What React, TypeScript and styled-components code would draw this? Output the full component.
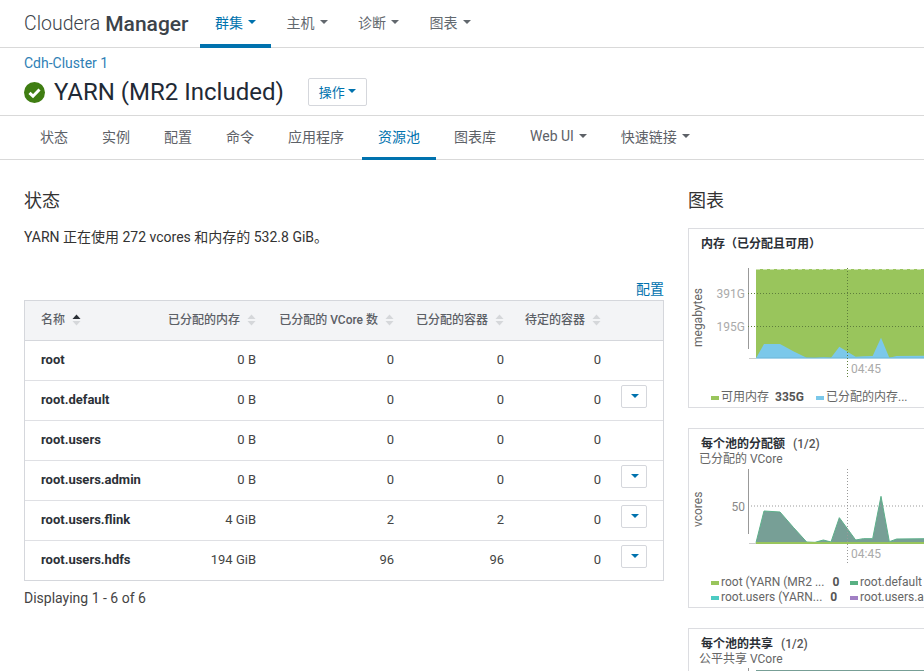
import React from "react";
import styled, { createGlobalStyle } from "styled-components";

const FONT = `Roboto, "Noto Sans CJK SC", sans-serif`;
const BLUE = "#0072ae";

const Global = createGlobalStyle`
  html, body { margin: 0; padding: 0; background: #fff; }
  body { font-family: ${FONT}; color: #333; }
  * { box-sizing: border-box; }
`;

const Page = styled.div`
  width: 924px;
  height: 671px;
  overflow: hidden;
`;

const TopBar = styled.header`
  height: 48px;
  display: flex;
  align-items: stretch;
  padding-left: 24px;
  border-bottom: 1px solid #d9d9d9;
`;

const Logo = styled.div`
  width: 176px;
  display: flex;
  align-items: center;
  height: 47px;
  font-size: 19.5px;
  font-weight: 300;
  color: #3c434a;
  white-space: nowrap;
  b { font-size: 21px; font-weight: 500; margin-left: 5px; }
`;

const TopItem = styled.a<{ $active?: boolean }>`
  height: 48px;
  margin-right: 0.5px;
  padding: 2px 15px 3px;
  display: flex;
  align-items: center;
  gap: 3px;
  font-size: 14px;
  color: ${(p) => (p.$active ? BLUE : "#62686e")};
  border-bottom: 4px solid ${(p) => (p.$active ? BLUE : "transparent")};
`;

const Caret = styled.span<{ $color?: string }>`
  display: inline-block;
  width: 0;
  height: 0;
  margin-left: 2px;
  border-left: 4px solid transparent;
  border-right: 4px solid transparent;
  border-top: 4px solid ${(p) => p.$color ?? "currentColor"};
`;

const ServiceHead = styled.div`
  height: 68px;
  padding: 7px 24px 0;
  border-bottom: 1px solid #d9d9d9;
`;

const Crumb = styled.a`
  display: block;
  font-size: 14px;
  line-height: 16px;
  color: #2f7fb5;
`;

const TitleRow = styled.div`
  display: flex;
  align-items: center;
  margin-top: 6px;
  height: 30px;
`;

const Title = styled.h1`
  margin: 0 24px 0 9px;
  font-size: 24px;
  font-weight: 400;
  color: #1f2a36;
  line-height: 30px;
  white-space: nowrap;
`;

const ActionButton = styled.button`
  width: 59px;
  height: 28px;
  padding: 0 0 2px;
  display: flex;
  align-items: center;
  justify-content: center;
  gap: 1px;
  font: 13px ${FONT};
  color: ${BLUE};
  background: #fff;
  border: 1px solid #d5d7dc;
  border-radius: 2px;
`;

const Tabs = styled.nav`
  height: 44px;
  display: flex;
  padding-left: 23px;
  border-bottom: 1px solid #d9d9d9;
`;

const Tab = styled.a<{ $active?: boolean }>`
  height: 44px;
  margin: 0 1px;
  padding: 0 16px 2px;
  display: flex;
  align-items: center;
  gap: 3px;
  font-size: 14px;
  white-space: nowrap;
  color: ${(p) => (p.$active ? BLUE : "#5d6167")};
  border-bottom: 3px solid ${(p) => (p.$active ? BLUE : "transparent")};
`;

const Columns = styled.main`
  display: grid;
  grid-template-columns: 640px 420px;
  column-gap: 24px;
  padding: 28px 0 0 24px;
`;

const SectionTitle = styled.h2`
  margin: 0;
  font-size: 18px;
  line-height: 26px;
  font-weight: 400;
  color: #333;
`;

const Summary = styled.p`
  margin: 13px 0 0;
  font-size: 14px;
  line-height: 20px;
  color: #333;
`;

const ConfigLink = styled.a`
  display: block;
  margin-top: 32px;
  text-align: right;
  font-size: 14px;
  line-height: 20px;
  color: ${BLUE};
`;

const Table = styled.table`
  width: 640px;
  margin-top: 1px;
  table-layout: fixed;
  border-collapse: separate;
  border-spacing: 0;
  border: 1px solid #d5d7dc;
  font-size: 13px;
`;

const HeadCell = styled.th<{ $right?: boolean; $first?: boolean }>`
  height: 40px;
  padding: 0 8px 5px ${(p) => (p.$first ? "16px" : "0")};
  background: #f3f4f6;
  border-bottom: 1px solid #d5d7dc;
  text-align: ${(p) => (p.$right ? "right" : "left")};
  font-size: 12px;
  font-weight: 500;
  color: #5c6066;
  white-space: nowrap;
`;

const Cell = styled.td<{ $right?: boolean; $first?: boolean; $last?: boolean }>`
  height: ${(p) => (p.$last ? "39px" : "40px")};
  padding: 0 8px 2px ${(p) => (p.$first ? "16px" : "0")};
  border-bottom: ${(p) => (p.$last ? "none" : "1px solid #dfe0e4")};
  text-align: ${(p) => (p.$right ? "right" : "left")};
  font-weight: ${(p) => (p.$first ? 700 : 400)};
  color: ${(p) => (p.$first ? "#2b3036" : "#444")};
  white-space: nowrap;
`;

const RowMenu = styled.button`
  width: 26px;
  height: 23px;
  padding: 0;
  margin: 0 0 7px 12px;
  display: flex;
  align-items: center;
  justify-content: center;
  background: #fff;
  border: 1px solid #d5d7dc;
  border-radius: 2px;
  color: ${BLUE};
`;

const Footnote = styled.div`
  margin-top: 7px;
  font-size: 14px;
  line-height: 20px;
  color: #444;
`;

const Cards = styled.div`
  display: flex;
  flex-direction: column;
  gap: 20px;
  margin-top: 14px;
`;

const Card = styled.section`
  height: 180px;
  border: 1px solid #dcdde1;
  padding: 7px 0 0 12px;
`;

const CardTitle = styled.div`
  font-size: 12px;
  line-height: 16px;
  font-weight: 700;
  color: #2b3036;
  white-space: nowrap;
  span { font-weight: 500; color: #555; margin-left: 8px; }
`;

const CardSub = styled.div`
  margin-left: -2px;
  font-size: 12px;
  line-height: 14px;
  color: #666;
  white-space: nowrap;
`;

const Plot = styled.svg`
  display: block;
  margin-left: -21px;
  font-family: ${FONT};
`;

const Legend = styled.div`
  display: grid;
  grid-template-columns: 130px 130px;
  margin-left: 10px;
  font-size: 12px;
  line-height: 15px;
  color: #666;
`;

const LegendItem = styled.div<{ $offset?: number; $gap?: number }>`
  display: flex;
  align-items: center;
  white-space: nowrap;
  margin-left: ${(p) => p.$offset ?? 0}px;
  b { font-weight: 700; color: #555; margin-left: ${(p) => p.$gap ?? 8}px; }
`;

const Swatch = styled.i<{ $color: string }>`
  width: 8px;
  height: 4px;
  margin-right: 2px;
  background: ${(p) => p.$color};
`;

const SortGlyph = styled.svg`
  margin-left: 7px;
  vertical-align: -2px;
`;

const SortIcon = ({ active }: { active?: boolean }) => (
  <SortGlyph width="9" height="12" viewBox="0 0 9 12">
    <path d="M4.5 0.5 8.5 5H0.5Z" fill={active ? "#2b3036" : "#d5d7da"} />
    <path d="M0.5 7H8.5L4.5 11.5Z" fill="#d5d7da" />
  </SortGlyph>
);

const OkIcon = () => (
  <svg width="21" height="21" viewBox="0 0 21 21">
    <circle cx="10.5" cy="10.5" r="10.5" fill="#3f7d12" />
    <path d="M5.5 10.8 9 14.2 15.5 7.5" fill="none" stroke="#fff" strokeWidth="3" />
  </svg>
);

const toPts = (raw: number[][], oy: number) =>
  raw.map(([x, y]) => `${680 + x / 3},${oy + y / 3}`).join(" ");

const memShape = [[228,535],[252,492],[300,492],[340,514],[380,533],[405,534],[430,532],[453,533],[478,500],[527,530],[550,529],[578,528],[603,473],[628,533],[650,528],[750,527],[750,535]];
const poolShape = [[228,368],[252,273],[300,276],[340,322],[380,366],[405,367],[430,360],[453,366],[478,293],[527,360],[550,356],[578,356],[603,229],[628,365],[650,357],[750,356],[750,368]];

const rows = [
  { name: "root", mem: "0 B", v: "0", c: "0", p: "0", menu: false },
  { name: "root.default", mem: "0 B", v: "0", c: "0", p: "0", menu: true },
  { name: "root.users", mem: "0 B", v: "0", c: "0", p: "0", menu: false },
  { name: "root.users.admin", mem: "0 B", v: "0", c: "0", p: "0", menu: true },
  { name: "root.users.flink", mem: "4 GiB", v: "2", c: "2", p: "0", menu: true },
  { name: "root.users.hdfs", mem: "194 GiB", v: "96", c: "96", p: "0", menu: true },
];

const tabs = ["状态", "实例", "配置", "命令", "应用程序", "资源池", "图表库"];

export default function App() {
  return (
    <Page>
      <Global />
      <TopBar>
        <Logo>Cloudera<b>Manager</b></Logo>
        <TopItem $active>群集<Caret /></TopItem>
        <TopItem>主机<Caret /></TopItem>
        <TopItem>诊断<Caret /></TopItem>
        <TopItem>图表<Caret /></TopItem>
      </TopBar>
      <ServiceHead>
        <Crumb>Cdh-Cluster 1</Crumb>
        <TitleRow>
          <OkIcon />
          <Title>YARN (MR2 Included)</Title>
          <ActionButton>操作<Caret /></ActionButton>
        </TitleRow>
      </ServiceHead>
      <Tabs>
        {tabs.map((t) => (
          <Tab key={t} $active={t === "资源池"}>{t}</Tab>
        ))}
        <Tab>Web UI<Caret /></Tab>
        <Tab>快速链接<Caret /></Tab>
      </Tabs>
      <Columns>
        <div>
          <SectionTitle>状态</SectionTitle>
          <Summary>YARN 正在使用 272 vcores 和内存的 532.8 GiB。</Summary>
          <ConfigLink>配置</ConfigLink>
          <Table>
            <colgroup>
              <col width="120" />
              <col width="119" />
              <col width="138" />
              <col width="110" />
              <col width="97" />
              <col width="54" />
            </colgroup>
            <thead>
              <tr>
                <HeadCell $first>名称<SortIcon active /></HeadCell>
                <HeadCell $right>已分配的内存<SortIcon /></HeadCell>
                <HeadCell $right>已分配的 VCore 数<SortIcon /></HeadCell>
                <HeadCell $right>已分配的容器<SortIcon /></HeadCell>
                <HeadCell $right>待定的容器<SortIcon /></HeadCell>
                <HeadCell />
              </tr>
            </thead>
            <tbody>
              {rows.map((r, i) => {
                const last = i === rows.length - 1;
                return (
                  <tr key={r.name}>
                    <Cell $first $last={last}>{r.name}</Cell>
                    <Cell $right $last={last}>{r.mem}</Cell>
                    <Cell $right $last={last}>{r.v}</Cell>
                    <Cell $right $last={last}>{r.c}</Cell>
                    <Cell $right $last={last}>{r.p}</Cell>
                    <Cell $last={last}>
                      {r.menu && <RowMenu><Caret /></RowMenu>}
                    </Cell>
                  </tr>
                );
              })}
            </tbody>
          </Table>
          <Footnote>Displaying 1 - 6 of 6</Footnote>
        </div>
        <div>
          <SectionTitle>图表</SectionTitle>
          <Cards>
            <Card>
              <CardTitle>内存（已分配且可用）</CardTitle>
              <Plot width="244" height="138" viewBox="680 252 244 138">
                <polygon points="756,269 930,269 930,358 756,358" fill="#99c55c" />
                <line x1="756" x2="930" y1="269" y2="269" stroke="#fff" strokeDasharray="4 3" />
                <polygon points={toPts(memShape, 180)} fill="#7bc8ea" />
                <line x1="756" x2="930" y1="358" y2="358" stroke="#6fb6d8" />
                <line x1="748.5" x2="748.5" y1="268" y2="349" stroke="#999" />
                <line x1="749" x2="756" y1="358.5" y2="358.5" stroke="#ccc" />
                <g stroke="#5f7f3c" strokeDasharray="1 2">
                  <line x1="748" x2="930" y1="293.5" y2="293.5" />
                  <line x1="748" x2="930" y1="326.5" y2="326.5" />
                  <line x1="847.5" x2="847.5" y1="268" y2="378" />
                </g>
                <g fontSize="12" fill="#aaa">
                  <text x="745" y="298" textAnchor="end">391G</text>
                  <text x="745" y="331" textAnchor="end">195G</text>
                  <text x="851" y="373">04:45</text>
                </g>
                <text transform="translate(702 347) rotate(-90)" fontSize="12" fill="#666">megabytes</text>
              </Plot>
              <Legend>
                <LegendItem $gap={6}><Swatch $color="#99c55c" />可用内存<b>335G</b></LegendItem>
                <LegendItem $offset={-25}><Swatch $color="#7bc8ea" />已分配的内存...</LegendItem>
              </Legend>
            </Card>
            <Card>
              <CardTitle>每个池的分配额<span>(1/2)</span></CardTitle>
              <CardSub>已分配的 VCore</CardSub>
              <Plot width="244" height="109" viewBox="680 466 244 109">
                <polygon points={toPts(poolShape, 420)} fill="#779f96" stroke="#5cb08a" />
                <line x1="756" x2="930" y1="543" y2="543" stroke="#99c55c" strokeWidth="2" />
                <line x1="748.5" x2="748.5" y1="469" y2="534" stroke="#999" />
                <line x1="749" x2="756" y1="543.5" y2="543.5" stroke="#ccc" />
                <g stroke="#999" strokeDasharray="1 2">
                  <line x1="748" x2="930" y1="506" y2="506" />
                  <line x1="847.5" x2="847.5" y1="469" y2="565" />
                </g>
                <g fontSize="12" fill="#aaa">
                  <text x="745" y="511" textAnchor="end" fill="#888">50</text>
                  <text x="851" y="558">04:45</text>
                </g>
                <text transform="translate(702 527) rotate(-90)" fontSize="12" fill="#666">vcores</text>
              </Plot>
              <Legend>
                <LegendItem><Swatch $color="#99c55c" />root (YARN (MR2 ...<b>0</b></LegendItem>
                <LegendItem $offset={9}><Swatch $color="#58b083" />root.default</LegendItem>
                <LegendItem><Swatch $color="#4dcbc3" />root.users (YARN...<b>0</b></LegendItem>
                <LegendItem $offset={9}><Swatch $color="#a17fc4" />root.users.admin</LegendItem>
              </Legend>
            </Card>
            <Card>
              <CardTitle>每个池的共享<span>(1/2)</span></CardTitle>
              <CardSub>公平共享 VCore</CardSub>
              <Plot width="244" height="20" viewBox="680 666 244 20">
                <rect x="756" y="670" width="180" height="20" fill="#779f96" />
                <line x1="748.5" x2="748.5" y1="668" y2="690" stroke="#999" />
              </Plot>
            </Card>
          </Cards>
        </div>
      </Columns>
    </Page>
  );
}
